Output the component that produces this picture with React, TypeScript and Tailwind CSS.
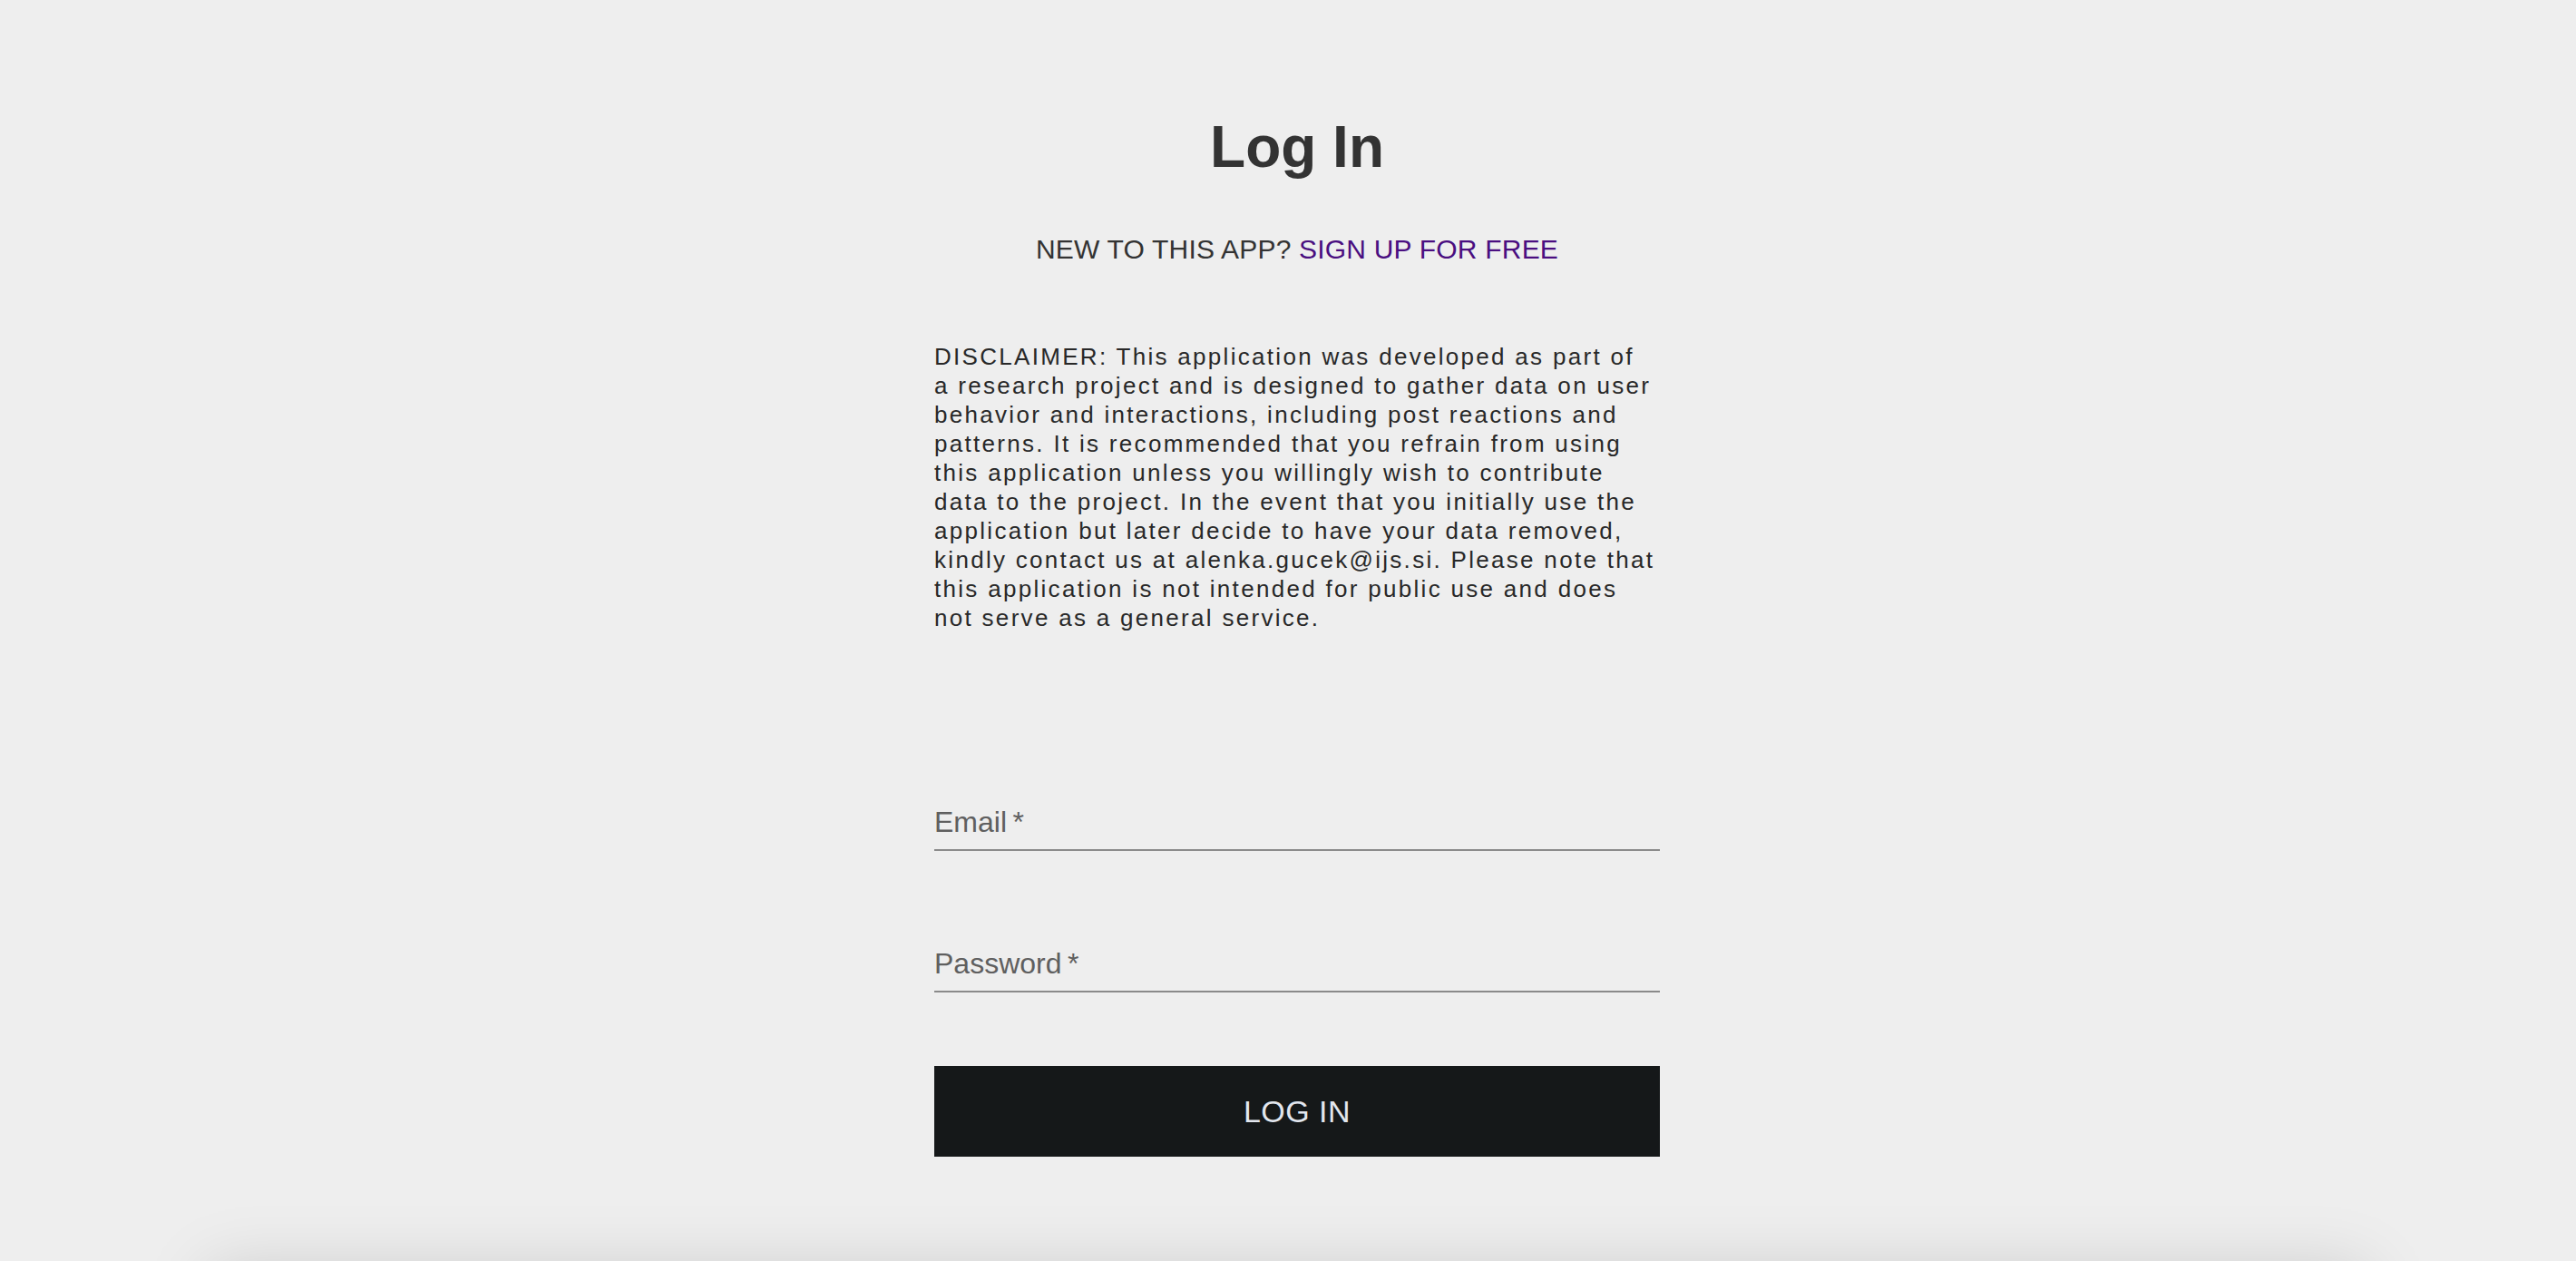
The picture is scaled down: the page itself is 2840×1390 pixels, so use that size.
import React, { useState } from "react";

const disclaimer =
  "DISCLAIMER: This application was developed as part of a research project and is designed to gather data on user behavior and interactions, including post reactions and patterns. It is recommended that you refrain from using this application unless you willingly wish to contribute data to the project. In the event that you initially use the application but later decide to have your data removed, kindly contact us at alenka.gucek@ijs.si. Please note that this application is not intended for public use and does not serve as a general service.";

interface FieldProps {
  label: string;
  name: string;
  type: string;
  value: string;
  onChange: (e: React.ChangeEvent<HTMLInputElement>) => void;
}

function Field({ label, name, type, value, onChange }: FieldProps) {
  return (
    <label className="relative block border-b-2 border-[#8a8a8a] pb-[14px]">
      <span className={`block text-[32px] leading-[32px] text-[#5f5f5f] ${value ? "invisible" : ""}`}>
        {label}
        {"\u2009*"}
      </span>
      <input
        name={name}
        type={type}
        value={value}
        onChange={onChange}
        className="absolute inset-0 w-full bg-transparent text-[32px] text-[#222] outline-none"
      />
    </label>
  );
}

export default function App() {
  const [form, setForm] = useState({ email: "", password: "" });

  const handleChange = (e: React.ChangeEvent<HTMLInputElement>) => {
    const { name, value } = e.target;
    setForm((prev) => ({ ...prev, [name]: value }));
  };

  return (
    <div className="flex h-screen flex-col overflow-hidden bg-[#eeeeee] font-['Liberation_Sans',Arial,sans-serif]">
      <div className="flex flex-none justify-center pl-[20px] pt-[130px]">
        <div className="flex w-[800px] flex-col">
          <h1 className="text-center text-[64px] font-bold leading-[64px] text-[#333333]">Log In</h1>
          <p className="mt-[66px] text-center text-[30px] leading-[30px] tracking-[0.2px] text-[#333333]">
            NEW TO THIS APP? <a className="cursor-pointer text-[#4a0e80]">SIGN UP FOR FREE</a>
          </p>
          <p className="mt-[87px] w-[796px] text-[26px] leading-[32px] tracking-[2.3px] text-[#282828]">{disclaimer}</p>
          <form className="mt-[193px] flex flex-col" onSubmit={(e) => e.preventDefault()}>
            <Field label="Email" name="email" type="email" value={form.email} onChange={handleChange} />
            <div className="mt-[108px]">
              <Field label="Password" name="password" type="password" value={form.password} onChange={handleChange} />
            </div>
            <button
              type="submit"
              className="mt-[81px] flex h-[100px] w-full items-center justify-center bg-[#151819] text-[34px] leading-[34px] tracking-[0.5px] text-[#e2e6ee]"
            >
              LOG IN
            </button>
          </form>
        </div>
      </div>
      <div className="mx-auto mt-[125px] h-[400px] w-[2380px] flex-none bg-[#eeeeee] shadow-[0_0_70px_rgba(0,0,0,0.15)]" />
    </div>
  );
}
